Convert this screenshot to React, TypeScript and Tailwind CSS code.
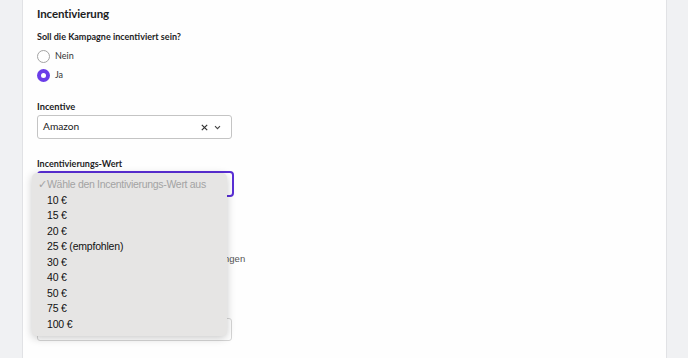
import { useState } from 'react'

const values = ['10 €', '15 €', '20 €', '25 € (empfohlen)', '30 €', '40 €', '50 €', '75 €', '100 €']

const sans = 'font-["Lato","Inter",sans-serif]'
const sys = 'font-["Liberation_Sans","Helvetica",sans-serif]'

function Radio({ label, checked }: { label: string; checked?: boolean }) {
  return (
    <label className="flex h-[16px] items-center gap-[5px]">
      {checked ? (
        <span className="flex h-[13px] w-[13px] items-center justify-center rounded-full bg-[#6a3de8]">
          <span className="h-[5px] w-[5px] rounded-full bg-white" />
        </span>
      ) : (
        <span className="h-[13px] w-[13px] rounded-full border border-[#a3a3a3] bg-white" />
      )}
      <span className="text-[9px] text-[#333]">{label}</span>
    </label>
  )
}

export default function App() {
  const [incentive] = useState('ja')

  return (
    <div className={`flex h-[358px] overflow-hidden bg-[#f0f1f3] ${sans}`}>
      <div className="w-[22px] shrink-0" />
      <div className="flex-1 border-x border-[#e1e2e5] bg-[#fefefe] pl-[14px]">
        <h2 className="pt-[4px] text-[11.5px] font-bold leading-[20px] tracking-[-0.1px] text-[#1d1d1f]">
          Incentivierung
        </h2>

        <p className="mt-[5px] text-[9px] font-bold leading-[16px] text-[#1d1d1f]">
          Soll die Kampagne incentiviert sein?
        </p>
        <div className="mt-[3px] flex flex-col gap-[3px]">
          <Radio label="Nein" checked={incentive === 'nein'} />
          <Radio label="Ja" checked={incentive === 'ja'} />
        </div>

        <p className="mt-[16px] text-[9.3px] font-bold leading-[16px] text-[#1d1d1f]">Incentive</p>
        <div className="flex h-[24px] w-[195px] items-center rounded-[3px] border border-[#c4c4c4] bg-white pl-[5px] pr-[10px]">
          <span className="flex-1 text-[10.2px] text-[#222]">Amazon</span>
          <svg width="7" height="7" viewBox="0 0 7 7" className="mr-[6px]">
            <path d="M0.8 0.8 L6.2 6.2 M6.2 0.8 L0.8 6.2" stroke="#333" strokeWidth="1.2" />
          </svg>
          <svg width="7" height="5" viewBox="0 0 7 5">
            <path d="M1 1.2 L3.5 3.7 L6 1.2" stroke="#444" strokeWidth="1.1" fill="none" />
          </svg>
        </div>

        <p className="mt-[18px] text-[9px] font-bold leading-[14px] text-[#1d1d1f]">Incentivierungs-Wert</p>
        <div className="relative h-[26px] w-[197px] rounded-[4px] border-2 border-[#5a2fd6] bg-white">
          <div
            className={`absolute left-[-7px] top-[0px] z-10 h-[163px] w-[195px] rounded-[5px] bg-[#e6e5e4] pt-[4px] shadow-[0_2px_8px_rgba(0,0,0,0.22)] ${sys}`}
          >
            <div className="relative pl-[15px] text-[10.5px] leading-[15.5px] tracking-[-0.3px] text-[#a3a3a3]">
              <span className="absolute left-[6px]">✓</span>
              Wähle den Incentivierungs-Wert aus
            </div>
            {values.map((v) => (
              <div key={v} className="pl-[15px] text-[10.5px] leading-[15.5px] tracking-[-0.2px] text-[#111]">
                {v}
              </div>
            ))}
          </div>
        </div>

        <div className={`mt-[55px] flex items-center gap-[21px] text-[9.5px] leading-[14px] text-[#555] ${sys}`}>
          <span className="h-[12px] w-[12px] rounded-[2px] border border-[#a3a3a3]" />
          <span>Ich akzeptiere die Teilnahmebedingungen</span>
        </div>

        <div className="mt-[52px] h-[23px] w-[195px] rounded-[3px] border border-[#d6d6d6] bg-white" />
      </div>
      <div className="w-[21px] shrink-0" />
    </div>
  )
}
